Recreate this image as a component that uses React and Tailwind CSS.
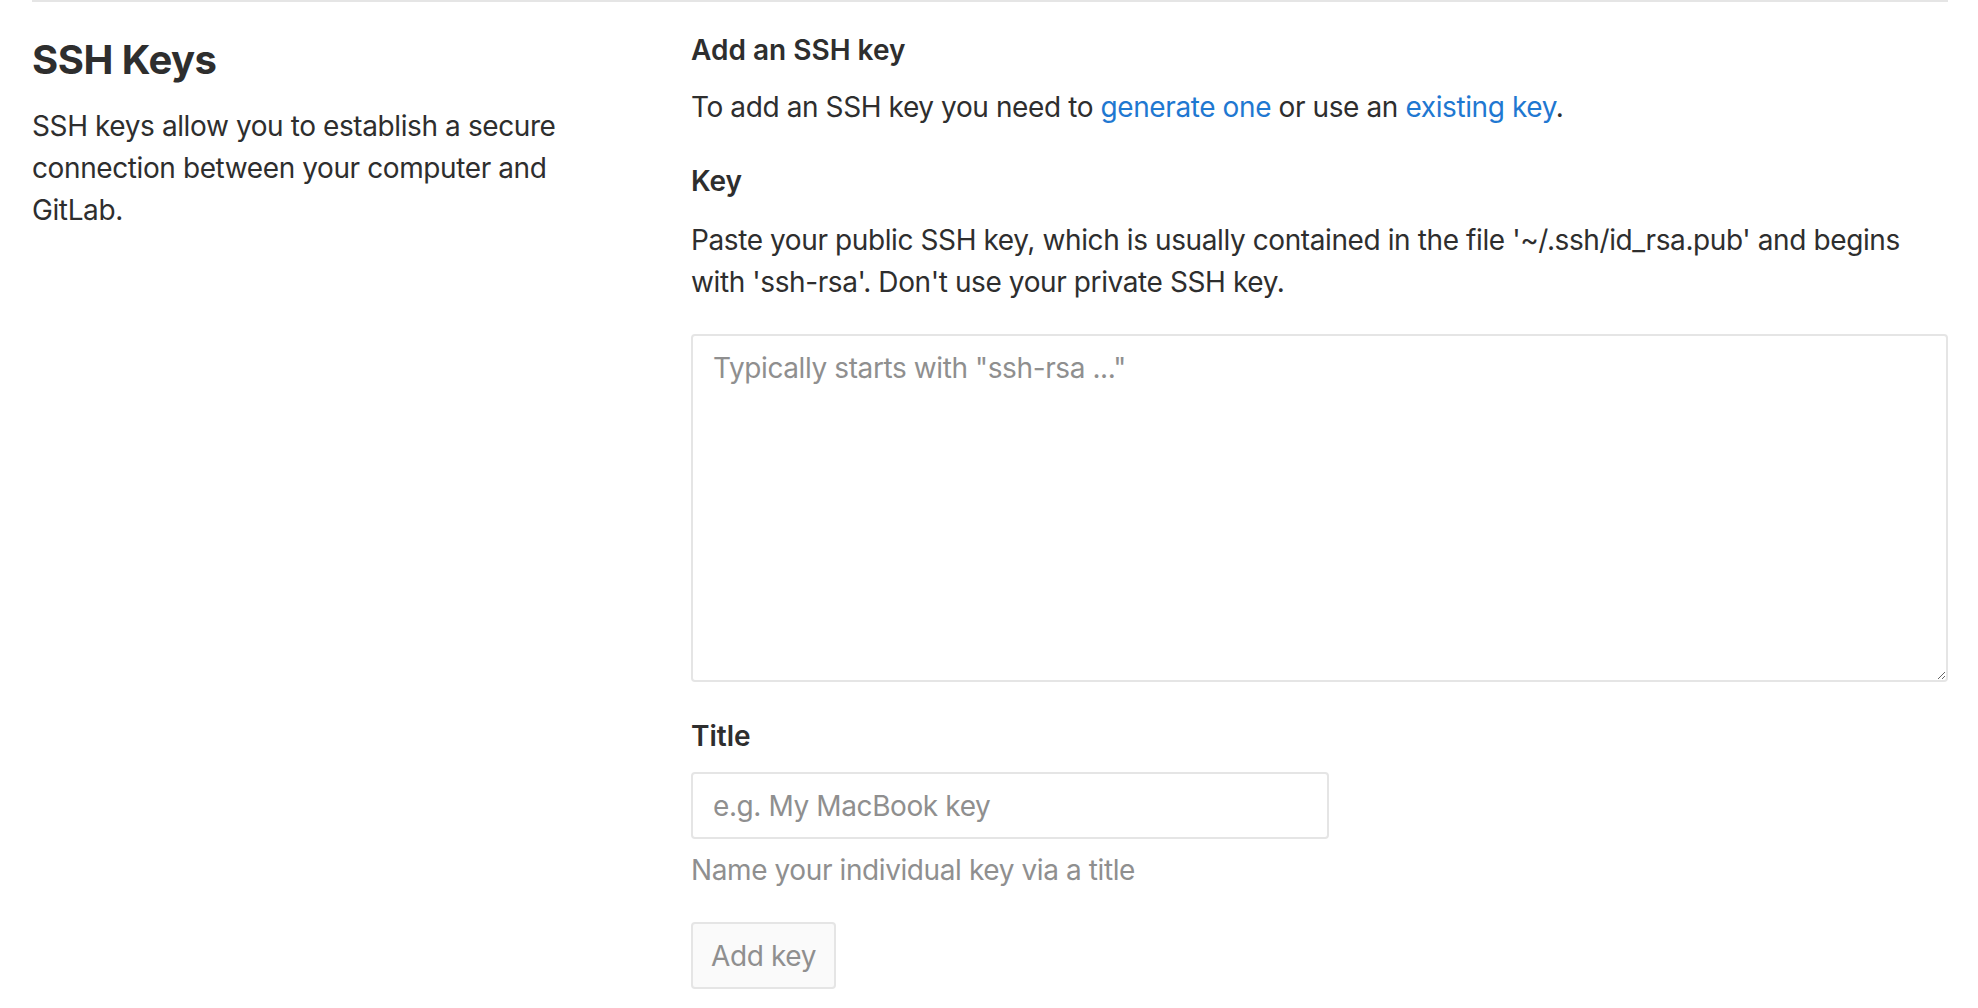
export default function App() {
  return (
    <div className="min-h-screen w-full bg-white text-[#2e2e2e]" style={{ fontFamily: "Inter, 'Noto Sans', sans-serif" }}>
      <div className="ml-[32px] w-[1916px]">
        <div className="h-[2px] w-full bg-[#e5e5e5]" />
        <div className="flex">
          <div className="w-[659px] shrink-0">
            <h4 className="mt-[35px] text-[40px] leading-[46px] font-bold tracking-[-0.5px]">SSH Keys</h4>
            <p className="mt-[22px] w-[600px] text-[28px] leading-[42px] tracking-[-0.4px]">
              SSH keys allow you to establish a secure connection between your computer and GitLab.
            </p>
          </div>
          <div className="w-[1257px] shrink-0">
            <h5 className="mt-[27px] text-[28px] leading-[42px] font-semibold">Add an SSH key</h5>
            <p className="mt-[15px] text-[28px] leading-[42px] tracking-[-0.4px]">
              To add an SSH key you need to{" "}
              <a className="text-[#1f78d1]" href="#">generate one</a> or use an{" "}
              <a className="text-[#1f78d1]" href="#">existing key</a>.
            </p>
            <label className="mt-[32px] block text-[28px] leading-[42px] font-semibold">Key</label>
            <p className="mt-[17px] text-[28px] leading-[42px] tracking-[-0.4px]">
              Paste your public SSH key, which is usually contained in the file '~/.ssh/id_rsa.pub' and begins with 'ssh-rsa'. Don't use your private SSH key.
            </p>
            <textarea
              className="mt-[31px] block h-[348px] w-full rounded-[4px] border-2 border-[#e5e5e5] px-[20px] py-[12px] text-[28px] leading-[40px] tracking-[-0.4px] text-[#2e2e2e] outline-none placeholder:text-[#8f8f8f]"
              placeholder={'Typically starts with "ssh-rsa ..."'}
            />
            <label className="mt-[33px] block text-[28px] leading-[42px] font-semibold">Title</label>
            <input
              className="mt-[15px] block h-[67px] w-[638px] rounded-[4px] border-2 border-[#e5e5e5] px-[20px] text-[28px] tracking-[-0.4px] text-[#2e2e2e] outline-none placeholder:text-[#8f8f8f]"
              placeholder="e.g. My MacBook key"
            />
            <p className="mt-[10px] text-[28px] leading-[42px] tracking-[-0.4px] text-[#8f8f8f]">Name your individual key via a title</p>
            <button
              disabled
              className="mt-[31px] flex h-[67px] w-[145px] items-center justify-center whitespace-nowrap rounded-[4px] border-2 border-[#e5e5e5] bg-[#fafafa] text-[28px] tracking-[-0.4px] text-[#8f8f8f]"
            >
              Add key
            </button>
          </div>
        </div>
      </div>
    </div>
  );
}
